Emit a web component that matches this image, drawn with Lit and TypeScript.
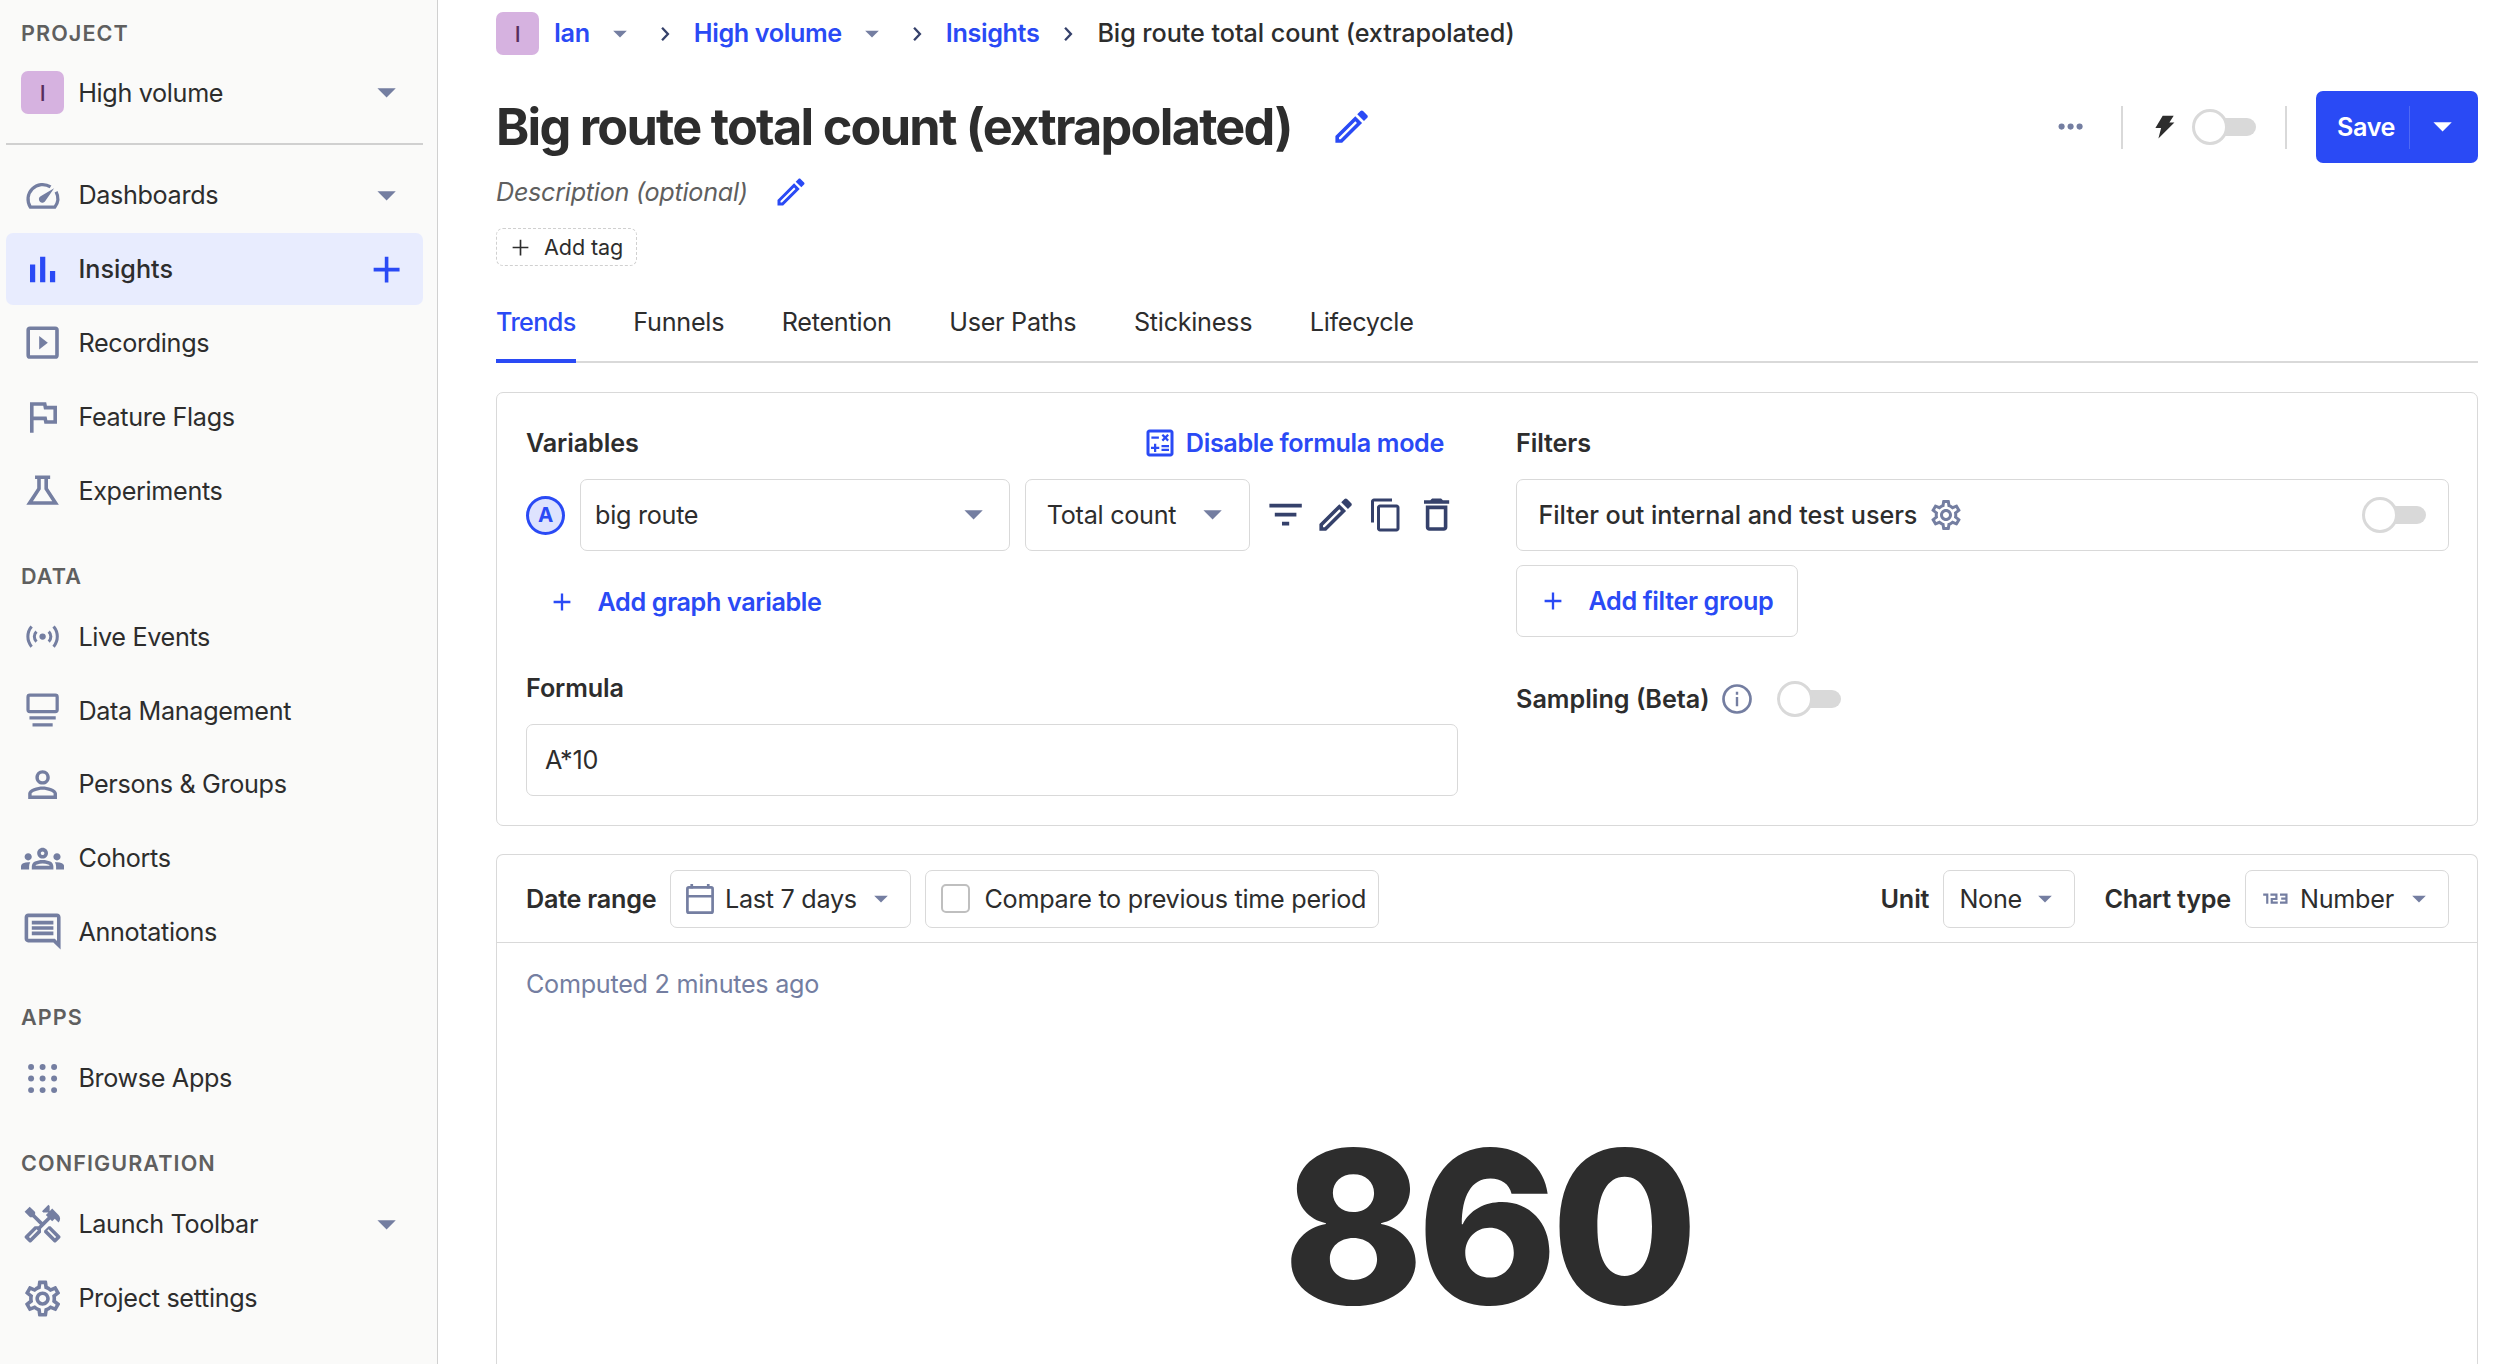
import { LitElement, html, css, svg } from "lit";
import { customElement, property } from "lit/decorators.js";

const GEAR =
  "M19.43 12.98c.04-.32.07-.64.07-.98 0-.34-.03-.66-.07-.98l2.11-1.65c.19-.15.24-.42.12-.64l-2-3.46c-.09-.16-.26-.25-.44-.25-.06 0-.12.01-.17.03l-2.49 1c-.52-.4-1.08-.73-1.69-.98l-.38-2.65C14.46 2.18 14.25 2 14 2h-4c-.25 0-.46.18-.49.42l-.38 2.65c-.61.25-1.17.59-1.69.98l-2.49-1c-.06-.02-.12-.03-.18-.03-.17 0-.34.09-.43.25l-2 3.46c-.13.22-.07.49.12.64l2.11 1.65c-.04.32-.07.65-.07.98 0 .33.03.66.07.98l-2.11 1.65c-.19.15-.24.42-.12.64l2 3.46c.09.16.26.25.44.25.06 0 .12-.01.17-.03l2.49-1c.52.4 1.08.73 1.69.98l.38 2.65c.03.24.24.42.49.42h4c.25 0 .46-.18.49-.42l.38-2.65c.61-.25 1.17-.59 1.69-.98l2.49 1c.06.02.12.03.18.03.17 0 .34-.09.43-.25l2-3.46c.12-.22.07-.49-.12-.64l-2.11-1.65zm-1.98-1.71c.04.31.05.52.05.73 0 .21-.02.43-.05.73l-.14 1.13.89.7 1.08.84-.7 1.21-1.27-.51-1.04-.42-.9.68c-.43.32-.84.56-1.25.73l-1.06.43-.16 1.13-.2 1.35h-1.4l-.19-1.35-.16-1.13-1.06-.43c-.43-.18-.83-.41-1.23-.71l-.91-.7-1.06.43-1.27.51-.7-1.21 1.08-.84.89-.7-.14-1.13c-.03-.31-.05-.54-.05-.74s.02-.43.05-.73l.14-1.13-.89-.7-1.08-.84.7-1.21 1.27.51 1.04.42.9-.68c.43-.32.84-.56 1.25-.73l1.06-.43.16-1.13.2-1.35h1.39l.19 1.35.16 1.13 1.06.43c.43.18.83.41 1.23.71l.91.7 1.06-.43 1.27-.51.7 1.21-1.07.85-.89.7.14 1.13zM12 8c-2.21 0-4 1.79-4 4s1.79 4 4 4 4-1.79 4-4-1.79-4-4-4zm0 6c-1.1 0-2-.9-2-2s.9-2 2-2 2 .9 2 2-.9 2-2 2z";

/* Every glyph is drawn on a 24 by 24 grid. */
const ICONS: Record<string, unknown> = {
  gauge: svg`<path d="M16.4 7.1A8.15 8.15 0 0 0 5.2 18.4h13.6a8.15 8.15 0 0 0 .7-8.6" fill="none" stroke="currentColor" stroke-width="1.8"/><path d="M18.4 7.9l-4.8 7a1.95 1.95 0 1 1-2.7-2.6z"/>`,
  bars: svg`<path d="M5 9.1h2.9V19H5zM10.6 4.8h2.9V19h-2.9zM16.1 12.8H19V19h-2.9z"/>`,
  play: svg`<path d="M19 3H5a2 2 0 0 0-2 2v14a2 2 0 0 0 2 2h14a2 2 0 0 0 2-2V5a2 2 0 0 0-2-2zm0 16H5V5h14z"/><path d="M10.1 8.3v7.6l4.8-3.8z"/>`,
  flag: svg`<path d="M12.36 6l.4 2H18v6h-3.36l-.4-2H7V6h5.36M14 4H5v17h2v-7h5.6l.4 2h7V6h-5.6L14 4z"/>`,
  flask: svg`<path d="M7.8 4.6h8.4M10 4.6v6.3l-5.2 8h14.4l-5.2-8V4.6" fill="none" stroke="currentColor" stroke-width="2"/>`,
  live: svg`<circle cx="12" cy="12" r="1.75"/><path d="M5.9 6.4a8.6 8.6 0 0 0 0 11.2M18.1 6.4a8.6 8.6 0 0 1 0 11.2M8.6 9.2a3.9 3.9 0 0 0 0 5.6M15.4 9.2a3.9 3.9 0 0 1 0 5.6" fill="none" stroke="currentColor" stroke-width="1.7"/>`,
  data: svg`<rect x="3.9" y="3.4" width="16.2" height="9.2" rx="1" fill="none" stroke="currentColor" stroke-width="1.8"/><path d="M4.7 15.1h14.6v1.8H4.7zM6.4 19h11.2v1.8H6.4z"/>`,
  person: svg`<path d="M12 5.9a2.1 2.1 0 1 1 0 4.2 2.1 2.1 0 0 1 0-4.2m0 9c2.97 0 6.1 1.46 6.1 2.1v1.1H5.9V17c0-.64 3.13-2.1 6.1-2.1M12 4C9.79 4 8 5.79 8 8s1.79 4 4 4 4-1.79 4-4-1.79-4-4-4zm0 9c-2.67 0-8 1.34-8 4v3h16v-3c0-2.66-5.33-4-8-4z"/>`,
  groups: svg`<path d="M4 13c1.1 0 2-.9 2-2s-.9-2-2-2-2 .9-2 2 .9 2 2 2zm1.13 1.1C4.76 14.04 4.39 14 4 14c-.99 0-1.93.21-2.78.58C.48 14.9 0 15.62 0 16.43V18h4.5v-1.61c0-.83.23-1.61.63-2.29zM20 13c1.1 0 2-.9 2-2s-.9-2-2-2-2 .9-2 2 .9 2 2 2zm4 3.43c0-.81-.48-1.53-1.22-1.85C21.93 14.21 20.99 14 20 14c-.39 0-.76.04-1.13.1.4.68.63 1.46.63 2.29V18H24v-1.57zM16.24 13.65c-1.17-.52-2.61-.9-4.24-.9-1.63 0-3.07.39-4.24.9C6.68 14.13 6 15.21 6 16.39V18h12v-1.61c0-1.18-.68-2.26-1.76-2.74zM8.07 16c.09-.23.13-.39.91-.69.97-.38 1.99-.56 3.02-.56s2.05.18 3.02.56c.77.3.81.46.91.69H8.07zM12 8c.55 0 1 .45 1 1s-.45 1-1 1-1-.45-1-1 .45-1 1-1m0-2c-1.66 0-3 1.34-3 3s1.34 3 3 3 3-1.34 3-3-1.34-3-3-3z"/>`,
  comment: svg`<path d="M21.99 4c0-1.1-.89-2-1.99-2H4c-1.1 0-2 .9-2 2v12c0 1.1.9 2 2 2h14l4 4-.01-18zM20 4v13.17L18.83 16H4V4h16zM6 12h12v2H6zm0-3h12v2H6zm0-3h12v2H6z"/>`,
  apps: svg`${[5.6, 12, 18.4].map((y) => [5.6, 12, 18.4].map((x) => svg`<circle cx=${x} cy=${y} r="1.65"/>`))}`,
  tools: svg`<path d="M21.67 18.17l-5.3-5.3h-.99l-2.54 2.54v.99l5.3 5.3c.39.39 1.02.39 1.41 0l2.12-2.12c.39-.38.39-1.02 0-1.41zm-2.83 1.42l-4.24-4.24.71-.71 4.24 4.24-.71.71z"/><path d="M17.34 10.19l1.41-1.41 2.12 2.12c1.17-1.17 1.17-3.07 0-4.24l-3.54-3.54-1.41 1.41V1.71L15.22 1l-3.54 3.54.71.71h2.83l-1.41 1.41 1.06 1.06-2.89 2.89-4.13-4.13V5.06L4.83 2.04 2 4.87 5.03 7.9h1.41l4.13 4.13-.85.85H7.6l-5.3 5.3c-.39.39-.39 1.02 0 1.41l2.12 2.12c.39.39 1.02.39 1.41 0l5.3-5.3v-2.12l5.15-5.15 1.06 1.05zm-7.98 5.15l-4.24 4.24-.71-.71 4.24-4.24.71.71z"/>`,
  gear: svg`<path d=${GEAR}/>`,
  pencil: svg`<path d="M14.06 9.02l.92.92L5.92 19H5v-.92l9.06-9.06M17.66 3c-.25 0-.51.1-.7.29l-1.83 1.83 3.75 3.75 1.83-1.83c.39-.39.39-1.02 0-1.41l-2.34-2.34c-.2-.2-.45-.29-.71-.29zm-3.6 3.19L3 17.25V21h3.75L17.81 9.94l-3.75-3.75z"/>`,
  formula: svg`<path d="M19 3H5c-1.1 0-2 .9-2 2v14c0 1.1.9 2 2 2h14c1.1 0 2-.9 2-2V5c0-1.1-.9-2-2-2zm0 16H5V5h14v14z"/><path d="M6.25 7.72h5v1.5h-5zM13 15.75h5v1.5h-5zM13 13.25h5v1.5h-5zM8 18h1.5v-2h2v-1.5h-2v-2H8v2H6V16h2zM14.09 10.95l1.41-1.41 1.41 1.41 1.06-1.06-1.41-1.42 1.41-1.41L16.91 6 15.5 7.41 14.09 6l-1.06 1.06 1.41 1.41-1.41 1.42z"/>`,
  filter: svg`<path d="M10 18h4v-2h-4v2zM3 6v2h18V6H3zm3 7h12v-2H6v2z"/>`,
  copy: svg`<path d="M16 1H4c-1.1 0-2 .9-2 2v14h2V3h12V1zm3 4H8c-1.1 0-2 .9-2 2v14c0 1.1.9 2 2 2h11c1.1 0 2-.9 2-2V7c0-1.1-.9-2-2-2zm0 16H8V7h11v14z"/>`,
  trash: svg`<path d="M6 19c0 1.1.9 2 2 2h8c1.1 0 2-.9 2-2V7H6v12zM8 9h8v10H8V9zm7.5-5l-1-1h-5l-1 1H5v2h14V4h-3.5z"/>`,
  info: svg`<circle cx="12" cy="12" r="9" fill="none" stroke="currentColor" stroke-width="1.8"/><path d="M11.2 10.7h1.6v6.2h-1.6zM11.2 7.2h1.6v1.9h-1.6z"/>`,
  calendar: svg`<rect x="3.6" y="4.3" width="16.8" height="16.8" rx="1" fill="none" stroke="currentColor" stroke-width="1.8"/><path d="M3.4 9.3h17.2V11H3.4zM5.6 2h1.8v3H5.6zM16.6 2h1.8v3h-1.8z"/>`,
  plus: svg`<path d="M12 4.8v14.4M4.8 12h14.4" fill="none" stroke="currentColor" stroke-width="2"/>`,
  thinPlus: svg`<path d="M12 3v18M3 12h18" fill="none" stroke="currentColor" stroke-width="1.9"/>`,
  caret: svg`<path d="M6.9 9.6h10.2L12 14.7z"/>`,
  chevron: svg`<path d="M8.5 4.5l7 7.5-7 7.5" fill="none" stroke="currentColor" stroke-width="2.8"/>`,
  dots: svg`<circle cx="7" cy="12" r="1.7"/><circle cx="12" cy="12" r="1.7"/><circle cx="17" cy="12" r="1.7"/>`,
  bolt: svg`<path d="M9.7.7h11L16.4 7.4h5L5.4 23.4 8.1 13H2.4z"/>`,
  digits: svg`<path d="M4.8 9.1h2.7v6M9.6 9.1h4v2.9h-3.1v2.4h4M16 9.1h4.3v5.3H16M16.8 11.8h3.5" fill="none" stroke="currentColor" stroke-width="1.45"/>`,
};

@customElement("ui-icon")
class UiIcon extends LitElement {
  @property() name = "";
  static styles = css`
    :host { display: block; flex: none; width: 43.2px; height: 43.2px; }
    .glyph { display: block; width: 100%; height: 100%; fill: currentColor; }
  `;
  render() {
    return html`<svg class="glyph" viewBox="0 0 24 24">${ICONS[this.name]}</svg>`;
  }
}

@customElement("ui-switch")
class UiSwitch extends LitElement {
  static styles = css`
    :host { display: grid; flex: none; width: 64px; height: 36px; align-items: center; }
    .track, .thumb { grid-area: 1 / 1; box-sizing: border-box; }
    .track { height: 18px; margin-left: 9px; border-radius: 9px; background: #d9d9d9; }
    .thumb { width: 36px; height: 36px; border: 3px solid #d9d9d9; border-radius: 50%; background: #fff; }
  `;
  render() {
    return html`<div class="track"></div><div class="thumb"></div>`;
  }
}

interface NavEntry { label: string; icon: string; caret?: boolean; active?: boolean }

const SECTIONS: { title?: string; items: NavEntry[] }[] = [
  { items: [
    { label: "Dashboards", icon: "gauge", caret: true },
    { label: "Insights", icon: "bars", active: true },
    { label: "Recordings", icon: "play" },
    { label: "Feature Flags", icon: "flag" },
    { label: "Experiments", icon: "flask" },
  ] },
  { title: "Data", items: [
    { label: "Live Events", icon: "live" },
    { label: "Data Management", icon: "data" },
    { label: "Persons & Groups", icon: "person" },
    { label: "Cohorts", icon: "groups" },
    { label: "Annotations", icon: "comment" },
  ] },
  { title: "Apps", items: [{ label: "Browse Apps", icon: "apps" }] },
  { title: "Configuration", items: [
    { label: "Launch Toolbar", icon: "tools", caret: true },
    { label: "Project settings", icon: "gear" },
  ] },
];

@customElement("side-nav")
class SideNav extends LitElement {
  static styles = css`
    :host { display: block; box-sizing: border-box; width: 438px; height: 100%; padding: 0 14px 0 6px; border-right: 1px solid #d0d0d0; background: #fafaf9; overflow: hidden; }
    .head { box-sizing: border-box; height: 70.6px; padding: 32.5px 0 0 15px; margin-bottom: 1.8px; font-size: 21.6px; line-height: 30px; font-weight: 600; letter-spacing: 1.08px; text-transform: uppercase; color: #5f5f5f; }
    .head.first { height: 55px; padding-top: 18px; }
    .row { display: flex; align-items: center; box-sizing: border-box; height: 72px; margin-bottom: 1.8px; padding: 0 14.5px 0 15px; border-radius: 7px; letter-spacing: -0.34px; }
    .row.active { background: #e8ecfe; font-weight: 500; letter-spacing: 0; }
    .label { flex: 1; margin-left: 14.2px; }
    .icon { color: #747ea1; }
    .active .icon, .more { color: #2a4af5; }
    .rule { height: 2px; margin: 14.6px 0 14px; background: #d0d0d0; }
    .tile { display: flex; align-items: center; justify-content: center; width: 43px; height: 43px; border-radius: 7px; background: #d6b2e0; color: #572e5e; font-size: 21.6px; font-weight: 500; }
  `;
  render() {
    return html`
      <div class="head first">Project</div>
      <div class="row"><span class="tile">I</span><span class="label">High volume</span><ui-icon class="icon" name="caret"></ui-icon></div>
      <div class="rule"></div>
      ${SECTIONS.map((s) => html`
        ${s.title ? html`<div class="head">${s.title}</div>` : ""}
        ${s.items.map((i) => html`
          <div class="row ${i.active ? "active" : ""}">
            <ui-icon class="icon" name=${i.icon}></ui-icon>
            <span class="label">${i.label}</span>
            ${i.caret ? html`<ui-icon class="icon" name="caret"></ui-icon>` : ""}
            ${i.active ? html`<ui-icon class="more" name="plus"></ui-icon>` : ""}
          </div>`)}
      `)}
    `;
  }
}

@customElement("app-root")
class AppRoot extends LitElement {
  static styles = css`
    :host { display: flex; width: 100%; height: 100vh; overflow: hidden; background: #fff; color: #2d2d2d; font-family: Inter, "Liberation Sans", sans-serif; font-size: 25.2px; line-height: 36px; letter-spacing: -0.28px; white-space: nowrap; }
    side-nav { flex: none; }
    .main { flex: 1; display: flex; flex-direction: column; min-width: 0; padding: 12px 36px 0 58px; }
    .line, .crumbs, .title-row, .desc, .tabs { display: flex; align-items: center; }
    .muted { color: #747ea1; }
    .dark { color: #35416b; }
    .link { color: #2a4af5; font-weight: 600; letter-spacing: -0.37px; }
    .strong { font-weight: 600; letter-spacing: -0.12px; }
    .medium { font-weight: 500; letter-spacing: -0.06px; }
    .grow { flex: 1; }
    .small { width: 36px; height: 36px; }

    .crumbs { flex: none; height: 43px; }
    .crumb { margin-top: -2px; }
    .tile { display: flex; align-items: center; justify-content: center; width: 43px; height: 43px; margin-right: 15px; border-radius: 7px; background: #d6b2e0; color: #572e5e; font-size: 21.6px; font-weight: 500; }
    .crumb-caret { width: 32px; height: 32px; margin-left: 14px; }
    .sep { width: 20px; height: 20px; margin: 0 19px; }

    .title-row { flex: none; height: 72px; margin-top: 36px; }
    h1 { margin: 0 38px 0 0; font-size: 50.4px; line-height: 72px; font-weight: 700; letter-spacing: -1.75px; }
    .vr { width: 2px; height: 43px; margin-left: 29px; background: #d9d9d9; }
    .bolt { width: 24px; height: 24px; margin: 0 15px 0 30px; }
    .save { display: flex; align-items: center; box-sizing: border-box; width: 162px; height: 72px; margin-left: 29px; border-radius: 7px; padding: 0 14px 0 21px; background: #2a4af5; color: #fff; font-weight: 600; letter-spacing: -0.4px; }
    .save-vr { width: 1px; height: 43px; margin: 0 11px 0 auto; background: #4f69f6; }

    .desc { flex: none; height: 36px; margin-top: 11px; color: #5f5f5f; font-style: italic; }
    .desc .small { margin-left: 25px; }
    .tag { display: flex; align-items: center; box-sizing: border-box; width: 141px; height: 38px; margin-top: 18px; padding-left: 13px; border: 1px dashed #d0d0d0; border-radius: 7px; font-size: 21.6px; letter-spacing: -0.1px; }
    .tag ui-icon { width: 21px; height: 21px; margin-right: 13px; }

    .tabs { flex: none; height: 77px; margin-top: 18px; gap: 57.6px; border-bottom: 2px solid #d9d9d9; }
    .tab { box-sizing: border-box; height: 79px; margin-bottom: -2px; line-height: 76px; }
    .tab.on { border-bottom: 4px solid #2a4af5; color: #2a4af5; font-weight: 500; letter-spacing: -0.6px; }

    .card { box-sizing: border-box; border: 1px solid #d9d9d9; border-radius: 7px; }
    .query { flex: none; display: grid; grid-template-columns: 932px 933px; column-gap: 58px; height: 434px; margin-top: 29px; padding: 0 29px; }
    .col { display: flex; flex-direction: column; }
    .col-head { height: 36px; margin: 32px 0 18px; }
    .box { display: flex; align-items: center; box-sizing: border-box; height: 72px; border: 1px solid #d9d9d9; border-radius: 7px; }
    .letter { display: flex; align-items: center; justify-content: center; box-sizing: border-box; width: 39px; height: 39px; margin-right: 15px; border: 3px solid #2a4af5; border-radius: 50%; background: #dee3fe; color: #2a4af5; font-size: 20.5px; font-weight: 700; }
    .event { width: 430px; padding: 0 14px; margin-right: 15px; }
    .math { width: 225px; padding: 0 15px 0 21px; margin-right: 14px; }
    .tools { gap: 7.2px; }
    .tool { display: flex; align-items: center; justify-content: center; width: 43.2px; height: 43.2px; }
    .add-var { height: 72px; margin-top: 15px; padding-left: 21.5px; }
    .add-plus { width: 28px; height: 28px; }
    .add-var .add-plus { margin-right: 22px; }
    .formula-head { height: 36px; margin: 32px 0 18px; }
    .formula { padding-left: 18px; }
    .calc { margin-right: 8px; }
    .calc-link { margin-right: 14px; }

    .test-users { padding: 0 22.5px 0 21.5px; }
    .test-users .small { margin-left: 11px; }
    .add-group { width: 282px; margin-top: 14px; padding-left: 21.5px; }
    .add-group .add-plus { margin-right: 22px; }
    .sampling { height: 36px; margin-top: 44px; }
    .sampling .small { margin: 0 22px 0 9px; }

    .result { flex: 1; min-height: 0; display: flex; flex-direction: column; margin-top: 28px; border-bottom: 0; border-radius: 7px 7px 0 0; }
    .bar { flex: none; display: flex; align-items: center; height: 87px; padding: 0 28px 0 29px; border-bottom: 1px solid #d9d9d9; }
    .chip { display: flex; align-items: center; box-sizing: border-box; height: 58px; margin-left: 14px; border: 1px solid #d9d9d9; border-radius: 7px; }
    .chip .crumb-caret { margin: 0 0 0 auto; }
    .date { width: 241px; padding: 0 13px 0 11px; }
    .date .small { margin-right: 6.5px; }
    .compare { width: 454px; padding-left: 15px; }
    .check { box-sizing: border-box; width: 29px; height: 29px; margin-right: 14px; border: 2px solid #bfbfbf; border-radius: 5px; }
    .unit { width: 132px; padding: 0 13px 0 15px; margin-right: 29px; }
    .chart { width: 204px; padding: 0 13px 0 10px; }
    .chart .small { margin-right: 8px; }
    .tight { letter-spacing: -0.24px; }
    .wide { letter-spacing: 0; }
    .computed { margin: 23px 0 0 29px; color: #747ea1; }
    .value { margin-top: 94px; text-align: center; font-size: 213px; line-height: 262px; font-weight: 800; letter-spacing: -7px; }
  `;

  render() {
    return html`
      <side-nav></side-nav>
      <div class="main">
        <div class="crumbs">
          <span class="tile">I</span>
          <span class="crumb link">Ian</span><ui-icon class="crumb-caret muted" name="caret"></ui-icon>
          <ui-icon class="sep dark" name="chevron"></ui-icon>
          <span class="crumb link">High volume</span><ui-icon class="crumb-caret muted" name="caret"></ui-icon>
          <ui-icon class="sep dark" name="chevron"></ui-icon>
          <span class="crumb link">Insights</span>
          <ui-icon class="sep dark" name="chevron"></ui-icon>
          <span class="crumb medium">Big route total count (extrapolated)</span>
        </div>

        <div class="title-row">
          <h1>Big route total count (extrapolated)</h1>
          <ui-icon class="link" name="pencil"></ui-icon>
          <span class="grow"></span>
          <ui-icon class="muted" name="dots"></ui-icon>
          <span class="vr"></span>
          <ui-icon class="bolt" name="bolt"></ui-icon>
          <ui-switch></ui-switch>
          <span class="vr"></span>
          <div class="save"><span>Save</span><span class="save-vr"></span><ui-icon name="caret"></ui-icon></div>
        </div>

        <div class="desc"><span>Description (optional)</span><ui-icon class="small link" name="pencil"></ui-icon></div>
        <div class="tag"><ui-icon name="thinPlus"></ui-icon>Add tag</div>

        <div class="tabs">
          ${["Trends", "Funnels", "Retention", "User Paths", "Stickiness", "Lifecycle"].map(
            (t, i) => html`<span class="tab ${i === 0 ? "on" : ""}">${t}</span>`)}
        </div>

        <div class="card query">
          <div class="col">
            <div class="line col-head">
              <span class="strong">Variables</span><span class="grow"></span>
              <ui-icon class="small link calc" name="formula"></ui-icon>
              <span class="link calc-link">Disable formula mode</span>
            </div>
            <div class="line">
              <span class="letter">A</span>
              <div class="box event"><span class="grow">big route</span><ui-icon class="muted" name="caret"></ui-icon></div>
              <div class="box math"><span class="grow">Total count</span><ui-icon class="muted" name="caret"></ui-icon></div>
              <div class="line tools dark">
                <span class="tool"><ui-icon name="filter"></ui-icon></span>
                <span class="tool"><ui-icon name="pencil"></ui-icon></span>
                <span class="tool"><ui-icon class="small" name="copy"></ui-icon></span>
                <span class="tool"><ui-icon name="trash"></ui-icon></span>
              </div>
            </div>
            <div class="line add-var link"><ui-icon class="add-plus" name="plus"></ui-icon>Add graph variable</div>
            <div class="formula-head strong">Formula</div>
            <div class="box formula">A*10</div>
          </div>
          <div class="col">
            <div class="line col-head strong">Filters</div>
            <div class="box test-users">
              <span class="medium">Filter out internal and test users</span>
              <ui-icon class="small muted" name="gear"></ui-icon>
              <span class="grow"></span><ui-switch></ui-switch>
            </div>
            <div class="box add-group link"><ui-icon class="add-plus" name="plus"></ui-icon>Add filter group</div>
            <div class="line sampling">
              <span class="strong wide">Sampling (Beta)</span>
              <ui-icon class="small muted" name="info"></ui-icon><ui-switch></ui-switch>
            </div>
          </div>
        </div>

        <div class="card result">
          <div class="bar">
            <span class="strong tight">Date range</span>
            <div class="chip date"><ui-icon class="small muted" name="calendar"></ui-icon>Last 7 days<ui-icon class="crumb-caret muted" name="caret"></ui-icon></div>
            <div class="chip compare"><span class="check"></span>Compare to previous time period</div>
            <span class="grow"></span>
            <span class="strong">Unit</span>
            <div class="chip unit">None<ui-icon class="crumb-caret muted" name="caret"></ui-icon></div>
            <span class="strong tight">Chart type</span>
            <div class="chip chart"><ui-icon class="small muted" name="digits"></ui-icon>Number<ui-icon class="crumb-caret muted" name="caret"></ui-icon></div>
          </div>
          <div class="computed">Computed 2 minutes ago</div>
          <div class="value">860</div>
        </div>
      </div>
    `;
  }
}
